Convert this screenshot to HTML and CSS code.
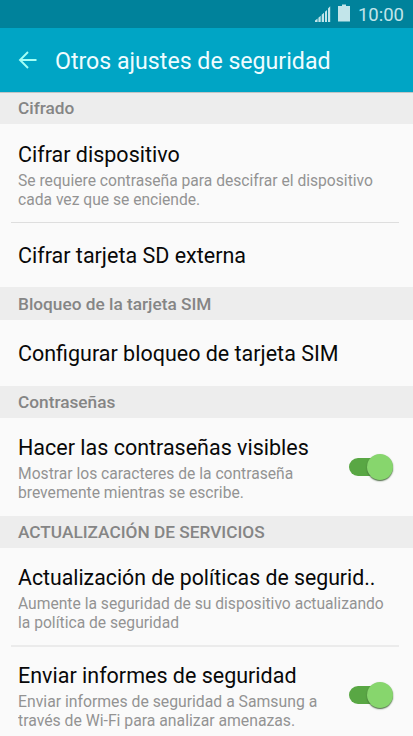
FILE: index.html
```html
<!DOCTYPE html>
<html lang="es">
<head>
<meta charset="utf-8">
<title>Otros ajustes de seguridad</title>
<link rel="stylesheet" href="styles.css">
</head>
<body>
<div class="status">
  <svg class="signal" width="16" height="16" viewBox="0 0 16 16"><path d="M0 16v-1.500L2.600 12.500V16zM3.400 16v-4.200l2.300-2V16zM6.700 16V8.800l2.300-2V16zM10 16V5.800l2-1.900V16zM13 16V2.400L15.200.3V16z"/></svg>
  <svg class="battery" width="12" height="18" viewBox="0 0 12 18"><path d="M4 .5h4V2h4v15.500H0V2h4z"/></svg>
  <span class="clock">10:00</span>
</div>
<header class="bar">
  <svg class="back" width="20" height="20" viewBox="0 0 20 20"><path d="M18.500 10H2M10 2L2 10l8 8"/></svg>
  <h1>Otros ajustes de seguridad</h1>
</header>
<main>
  <h2 class="first">Cifrado</h2>
  <section class="row tall divided">
    <div><h3>Cifrar dispositivo</h3><p>Se requiere contraseña para descifrar el dispositivo<br>cada vez que se enciende.</p></div>
  </section>
  <section class="row short"><h3>Cifrar tarjeta SD externa</h3></section>
  <h2 class="sim-title">Bloqueo de la tarjeta SIM</h2>
  <section class="row short sim"><h3>Configurar bloqueo de tarjeta SIM</h3></section>
  <h2>Contraseñas</h2>
  <section class="row tall raised">
    <div><h3>Hacer las contraseñas visibles</h3><p>Mostrar los caracteres de la contraseña<br>brevemente mientras se escribe.</p></div>
    <span class="switch"><i></i></span>
  </section>
  <h2>ACTUALIZACIÓN DE SERVICIOS</h2>
  <section class="row tall divided soft">
    <div><h3>Actualización de políticas de segurid..</h3><p>Aumente la seguridad de su dispositivo actualizando<br>la política de seguridad</p></div>
  </section>
  <section class="row tall last">
    <div><h3>Enviar informes de seguridad</h3><p>Enviar informes de seguridad a Samsung a<br>través de Wi-Fi para analizar amenazas.</p></div>
    <span class="switch"><i></i></span>
  </section>
</main>
</body>
</html>
```
FILE: styles.css
```css
* { box-sizing: border-box; margin: 0; padding: 0; }
body { width: 413px; height: 736px; overflow: hidden; background: #fafafa; color: #080808; font-family: Roboto, "Liberation Sans", sans-serif; }
.status { height: 28px; background: #00829b; display: flex; align-items: flex-start; padding: 4px 9px 0 0; justify-content: flex-end; color: #c2e5ea; }
.status svg { fill: #c2e5ea; }
.signal { margin: 2px 7px 0 0; }
.battery { margin-right: 7.500px; }
.clock { font-size: 18.500px; line-height: 22px; }
.bar { height: 64px; background: #00a5c5; display: flex; align-items: center; padding-left: 18px; }
.back { fill: none; stroke: #a4fff5; stroke-width: 1.9; }
.bar h1 { color: #effcff; font-size: 23.150px; font-weight: 400; line-height: 28px; margin: 4px 0 0 17px; white-space: nowrap; }
h2 { height: 32px; line-height: 32px; padding-left: 18px; background: #ededed; color: #858585; font-size: 17.250px; font-weight: 500; }
h2.first { border-top: 1px solid #c2c5c6; line-height: 30px; }
h2.sim-title { height: 33px; line-height: 34px; }
.row { display: flex; justify-content: space-between; padding: 0 20.500px 0 18.300px; position: relative; white-space: nowrap; }
.tall { height: 98px; padding-top: 17px; }
.short { height: 64px; padding-top: 19px; }
.sim { height: 66px; padding-top: 20px; }
.divided { height: 99px; }
.divided::after { content: ""; position: absolute; left: 11px; right: 14px; bottom: 0; height: 1px; background: #dedede; }
.soft::after { height: 2px; background: #ebebeb; }
.raised, .soft { padding-top: 16px; }
.last { padding-top: 15px; }
h3, p { transform: scaleX(.977); transform-origin: 0 50%; }
.soft h3 { transform: scaleX(.967); }
.last p { transform: scaleX(.985); }
h3 { font-size: 22px; line-height: 27px; font-weight: 400; }
p { font-size: 16px; line-height: 19px; color: #939393; margin-top: 3px; }
.switch { width: 44px; height: 18px; margin-top: 23.500px; position: relative; flex: none; }
.switch::before { content: ""; position: absolute; left: 0; top: 0; width: 34px; height: 18px; border-radius: 9px; background: #59a744; }
.switch i { position: absolute; right: 0; top: -4px; width: 26px; height: 26px; border-radius: 50%; background: #87d66d; box-shadow: 0 1px 1.500px #44633c; }
```
